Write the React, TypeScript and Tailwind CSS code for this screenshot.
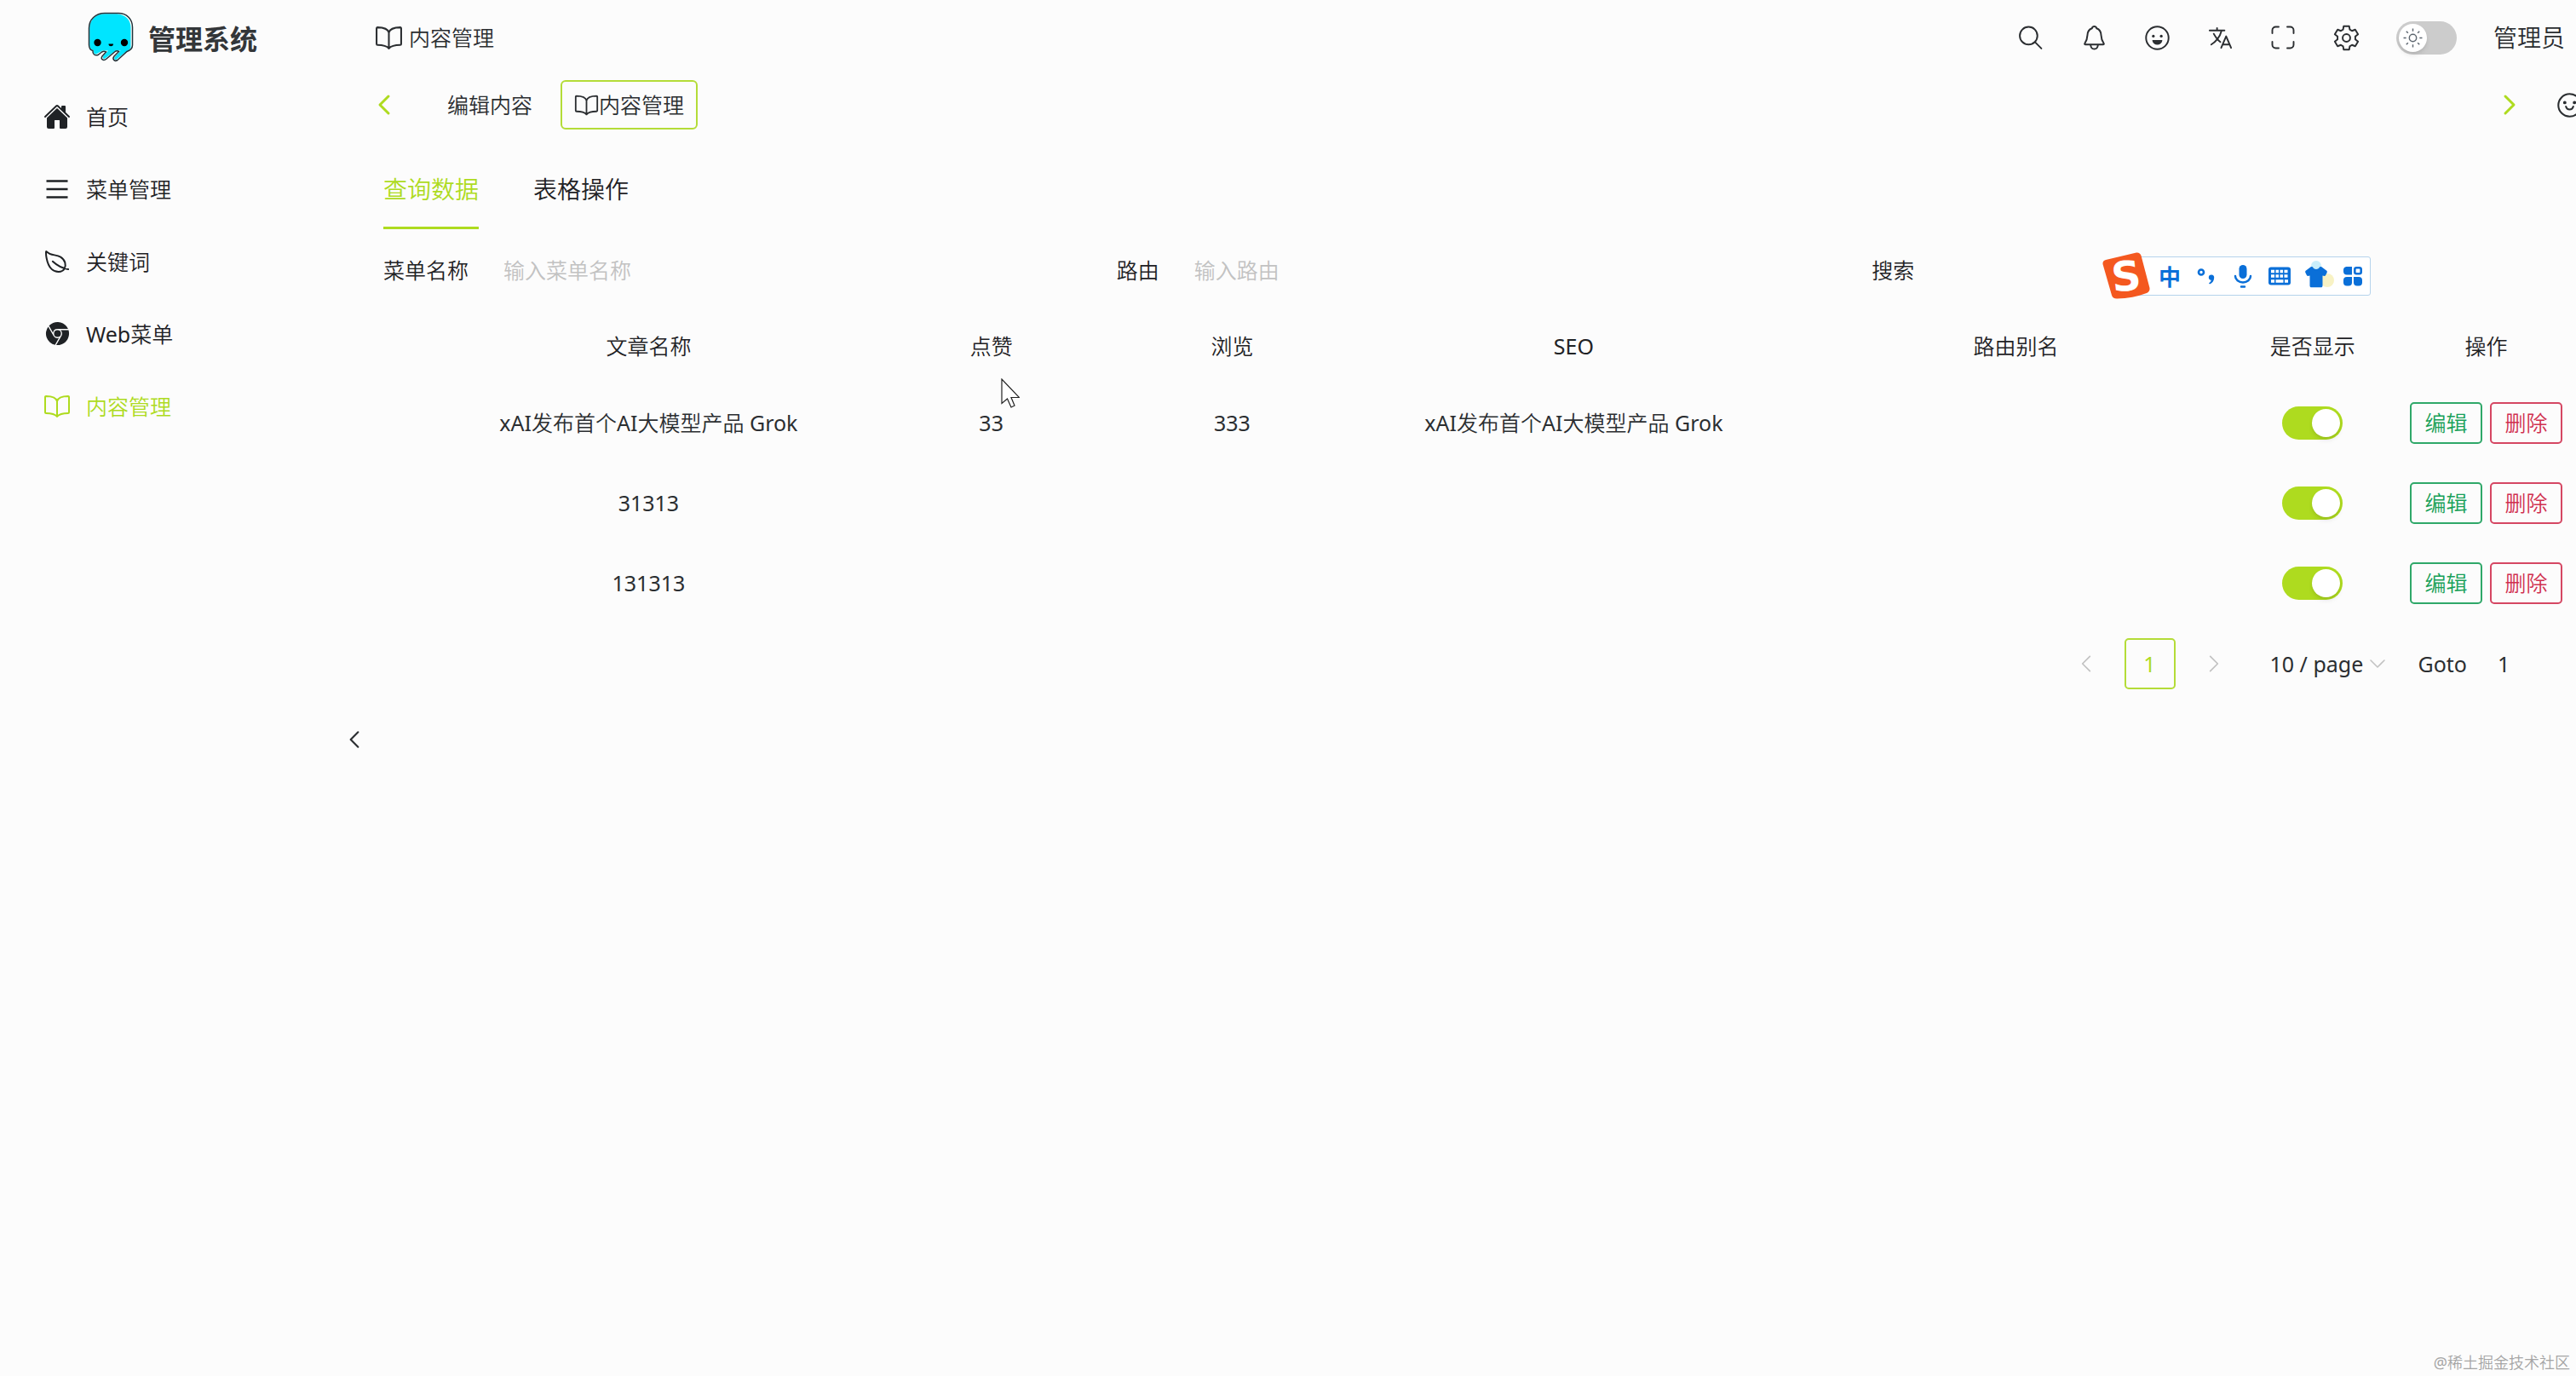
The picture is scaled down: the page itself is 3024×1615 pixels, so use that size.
import React, { useState } from "react";
import {
  IoBookOutline,
  IoHome,
  IoLanguageOutline,
  IoLeafOutline,
  IoLogoChrome,
} from "react-icons/io5";

const articles = [
  {
    id: 1,
    title: "xAI发布首个AI大模型产品 Grok",
    likes: "33",
    views: "333",
    seo: "xAI发布首个AI大模型产品 Grok",
    alias: "",
  },
  { id: 2, title: "31313", likes: "", views: "", seo: "", alias: "" },
  { id: 3, title: "131313", likes: "", views: "", seo: "", alias: "" },
];

function LogoIcon() {
  return (
    <svg viewBox="0 0 54 60" className="h-[60px] w-[54px]">
      <path
        d="M20 1.500H36C46 1.500 52.500 8.500 52.500 18V40C52.500 44 49 45.500 46 47L35 56.500C31 59 28.500 55 31 52L37 45.500L22 55C18.500 58 14.500 55.500 17 52L22 45.500L12 49.500C8 51.500 5.500 49 6 45.500C2.500 44.500 1.500 42 1.500 38.500V19C1.500 9 9 1.500 20 1.500Z"
        fill="#fff"
      />
      <path
        d="M20 2.200H34C44 3 50.500 9 50.500 18V41C50.500 44 47 45.500 44.500 47L34 55.500C32 57 30 55 32 52.500L38.500 45.500H33L21 54C19 56 16.500 54.500 18.500 51.500L24 45.500H17L11 49C8 50.500 6.500 48.500 7 45C3.500 44 2.200 42 2.200 38V19C2.200 9.500 9.500 2.200 20 2.200Z"
        fill="#00e5ff"
      />
      <path
        d="M20 1.500H36C46 1.500 52.500 8.500 52.500 18V39C52.500 43 50 45 46 46.500L35 56.500C31 59 28.500 55 31 52L36.500 46.500Q34 45 31.500 47L22 55C18.500 58 14.500 55.500 17 52L21.500 47Q19 45.500 16.500 47L12 50.500C8 51.500 5.500 49 6 45.500C2.500 44.500 1.500 42 1.500 38.500V19C1.500 9 9 1.500 20 1.500Z"
        fill="none"
        stroke="#22333a"
        strokeWidth="1.500"
      />
      <circle cx="11.500" cy="36" r="4.200" fill="#000" />
      <circle cx="43" cy="36" r="4.200" fill="#000" />
      <path d="M24.500 37.500h5.500q0 2.800-2.800 2.800t-2.700-2.800Z" fill="#000" />
    </svg>
  );
}

function MenuIcon() {
  return (
    <svg viewBox="0 0 30 30" className="size-[30px]">
      <path
        d="M2.500 5.500h25M2.500 15h25M2.500 24.500h25"
        stroke="currentColor"
        strokeWidth="2.400"
      />
    </svg>
  );
}

function SearchIcon() {
  return (
    <svg
      viewBox="0 0 30 30"
      className="size-[31px]"
      fill="none"
      stroke="currentColor"
      strokeWidth="1.900"
      strokeLinecap="round">
      <circle cx="12" cy="12.500" r="10" />
      <path d="M19.500 20l7 7" />
    </svg>
  );
}

function BellIcon() {
  return (
    <svg
      viewBox="0 0 30 30"
      className="size-[31px]"
      fill="none"
      stroke="currentColor"
      strokeWidth="1.900"
      strokeLinejoin="round">
      <path d="M15 2c-1.400 0-2.200.8-2.600 2.100C8.600 5.500 7.300 8.600 7.200 12c-.1 4.200-1.200 6.400-3 9.200-.4.800 0 1.300.8 1.300h20c.8 0 1.200-.5.800-1.300-1.800-2.800-2.900-5-3-9.200-.1-3.400-1.400-6.500-5.200-7.900C17.200 2.800 16.400 2 15 2Z" />
      <path d="M10.800 23c.3 2.900 2 4.600 4.200 4.600s3.900-1.700 4.200-4.600" />
    </svg>
  );
}

function GrinIcon() {
  return (
    <svg viewBox="0 0 30 30" className="size-[31px]">
      <circle
        cx="15"
        cy="15"
        r="12.800"
        fill="none"
        stroke="currentColor"
        strokeWidth="1.900"
      />
      <circle cx="10.500" cy="13" r="1.600" fill="currentColor" />
      <circle cx="19.500" cy="13" r="1.600" fill="currentColor" />
      <path
        d="M9.800 17.500h10.400c.4 0 .6.300.5.700-.6 2.800-2.900 4.600-5.700 4.600s-5.100-1.800-5.700-4.600c-.1-.4.1-.7.500-.7Z"
        fill="currentColor"
      />
    </svg>
  );
}

function ExpandIcon() {
  return (
    <svg
      viewBox="0 0 30 30"
      className="size-[30px]"
      fill="none"
      stroke="currentColor"
      strokeWidth="1.900"
      strokeLinecap="round">
      <path d="M2.500 10V6.500a4 4 0 0 1 4-4H10M20 2.500h3.500a4 4 0 0 1 4 4V10M27.500 20v3.500a4 4 0 0 1-4 4H20M10 27.500H6.500a4 4 0 0 1-4-4V20" />
    </svg>
  );
}

function GearIcon() {
  return (
    <svg
      viewBox="0 0 30 30"
      className="size-[31px]"
      fill="none"
      stroke="currentColor"
      strokeWidth="1.900"
      strokeLinejoin="round">
      <path d="M11.900 1.600h6.200l.7 3.900 2.500 1.500 3.700-1.400 3.200 5.300-3.100 2.500v3.200l3.100 2.500-3.200 5.300-3.700-1.400-2.500 1.500-.7 3.900h-6.200l-.7-3.900L8.700 23 5 24.400l-3.200-5.300 3.100-2.500v-3.200l-3.100-2.500L5 5.600 8.700 7l2.500-1.500Z" />
      <circle cx="15" cy="15" r="4.300" />
    </svg>
  );
}

function SunIcon() {
  return (
    <svg
      viewBox="0 0 22 22"
      className="pointer-events-none absolute top-2 left-2 size-[23px]"
      fill="none"
      stroke="#5d666f"
      strokeWidth="1.400">
      <circle cx="11" cy="11" r="4" />
      <path d="M11 .5v3M11 18.500v3M.5 11h3M18.500 11h3M3.600 3.600l2 2M16.400 16.400l2 2M3.600 18.400l2-2M16.400 5.600l2-2" />
    </svg>
  );
}

function SmileIcon() {
  return (
    <svg
      viewBox="0 0 30 30"
      className="size-[31px] shrink-0"
      fill="none"
      stroke="currentColor"
      strokeWidth="2"
      strokeLinecap="round">
      <circle cx="15" cy="15" r="12.800" />
      <circle cx="9.500" cy="12" r=".9" fill="currentColor" />
      <circle cx="20.500" cy="12" r=".9" fill="currentColor" />
      <path d="M10.800 16.500c.6 2.200 2.200 3.400 4.200 3.400s3.600-1.200 4.200-3.400" />
    </svg>
  );
}

function Chevron({ dir, className }: { dir: string; className?: string }) {
  const paths: any = {
    left: "M20 5L10 15l10 10",
    right: "M10 5l10 10-10 10",
    down: "M5 10l10 10 10-10",
  };
  return (
    <svg
      viewBox="0 0 30 30"
      className={className}
      fill="none"
      stroke="currentColor"
      strokeLinecap="round"
      strokeLinejoin="round">
      <path d={paths[dir]} />
    </svg>
  );
}

const menus = [
  { label: "首页", icon: <IoHome className="size-[32px]" /> },
  { label: "菜单管理", icon: <MenuIcon /> },
  { label: "关键词", icon: <IoLeafOutline className="size-[32px]" /> },
  { label: "Web菜单", icon: <IoLogoChrome className="size-[31px]" /> },
  { label: "内容管理", icon: <IoBookOutline className="size-[32px]" /> },
];

const tools = [
  { label: "搜索", icon: <SearchIcon /> },
  { label: "通知", icon: <BellIcon /> },
  { label: "表情", icon: <GrinIcon /> },
  { label: "语言", icon: <IoLanguageOutline className="size-[33px]" /> },
  { label: "全屏", icon: <ExpandIcon /> },
  { label: "设置", icon: <GearIcon /> },
];

function Sidebar() {
  const [active, setActive] = useState("内容管理");

  return (
    <aside className="relative w-[420px] shrink-0">
      <div className="flex h-[88px] items-center pl-[103px]">
        <LogoIcon />
        <h1 className="ml-[17px] font-['Noto_Sans_CJK_SC',sans-serif] text-[32px] font-bold text-[#333639]">
          管理系统
        </h1>
      </div>
      <nav className="mt-[6px]">
        {menus.map((m) => (
          <a
            key={m.label}
            href="#"
            onClick={() => setActive(m.label)}
            className={
              active === m.label
                ? "flex h-[85px] items-center pl-[50px] text-[#aedb1f]"
                : "flex h-[85px] items-center pl-[50px] text-[#1f2225]"
            }>
            <span className="flex w-[34px] justify-center">{m.icon}</span>
            <span className="ml-[17px]">{m.label}</span>
          </a>
        ))}
      </nav>
      <button
        aria-label="收起菜单"
        className="absolute top-[846px] -right-[18px] flex size-[44px] items-center justify-center">
        <Chevron dir="left" className="size-[26px] stroke-[2.5px]" />
      </button>
    </aside>
  );
}

function Header() {
  const [dark, setDark] = useState(false);

  return (
    <header className="flex h-[88px] items-center pr-[13px] pl-5">
      <IoBookOutline className="size-[33px]" />
      <span className="ml-[7px]">内容管理</span>
      <div className="ml-auto flex items-center gap-[43px]">
        {tools.map((t) => (
          <button
            key={t.label}
            aria-label={t.label}
            className="flex w-[31px] justify-center">
            {t.icon}
          </button>
        ))}
        <label className="relative flex">
          <input
            type="checkbox"
            role="switch"
            aria-label="暗色模式"
            checked={dark}
            onChange={() => setDark(!dark)}
            className="h-[39px] w-[71px] appearance-none rounded-full bg-[#cccccc] p-[3px] before:block before:size-[33px] before:rounded-full before:bg-white before:shadow-md"
          />
          <SunIcon />
        </label>
        <button className="text-[28px]">管理员</button>
      </div>
    </header>
  );
}

function Tags() {
  return (
    <div className="flex h-[70px] items-center overflow-hidden pl-4">
      <button aria-label="向左" className="text-[#aedb1f]">
        <Chevron dir="left" className="size-[30px] stroke-3" />
      </button>
      <button className="ml-[59px]">编辑内容</button>
      <button className="ml-[33px] flex h-[58px] items-center rounded-[6px] border-2 border-[#b4dc38] px-[14px]">
        <IoBookOutline className="size-[29px]" />
        内容管理
      </button>
      <button aria-label="向右" className="ml-auto text-[#aedb1f]">
        <Chevron dir="right" className="size-[30px] stroke-3" />
      </button>
      <button aria-label="标签操作" className="-mr-2 ml-[40px]">
        <SmileIcon />
      </button>
    </div>
  );
}

function Filters() {
  return (
    <form className="-mr-2 mt-[18px] grid h-[60px] grid-cols-3 items-center text-[#1f2225]">
      <div className="flex items-center">
        <label htmlFor="name">菜单名称</label>
        <input
          id="name"
          placeholder="输入菜单名称"
          className="ml-[41px] h-[60px] grow bg-transparent outline-none placeholder:text-[#c2c2c2]"
        />
      </div>
      <div className="flex items-center">
        <label htmlFor="route">路由</label>
        <input
          id="route"
          placeholder="输入路由"
          className="ml-[41px] h-[60px] grow bg-transparent outline-none placeholder:text-[#c2c2c2]"
        />
      </div>
      <button type="button" className="justify-self-start pl-[26px]">
        搜索
      </button>
    </form>
  );
}

function ArticleTable() {
  return (
    <div className="mt-4 pl-[60px]">
      <table className="w-full table-fixed text-center">
        <colgroup>
          <col className="w-[20%]" />
          <col className="w-[12%]" />
          <col className="w-[10.5%]" />
          <col className="w-[21.4%]" />
          <col className="w-[19.9%]" />
          <col className="w-[7.8%]" />
          <col />
        </colgroup>
        <thead>
          <tr className="h-[86px] text-[#1f2225]">
            <th className="font-normal">文章名称</th>
            <th className="font-normal">点赞</th>
            <th className="font-normal">浏览</th>
            <th className="font-normal">SEO</th>
            <th className="font-normal">路由别名</th>
            <th className="font-normal">是否显示</th>
            <th className="font-normal">操作</th>
          </tr>
        </thead>
        <tbody>
          {articles.map((a) => (
            <tr key={a.id} className="h-[94px]">
              <td>{a.title}</td>
              <td>{a.likes}</td>
              <td>{a.views}</td>
              <td>{a.seo}</td>
              <td>{a.alias}</td>
              <td>
                <input
                  type="checkbox"
                  role="switch"
                  aria-label="是否显示"
                  defaultChecked
                  className="mx-auto block h-[39px] w-[71px] appearance-none rounded-full bg-[#cccccc] p-[3px] before:block before:size-[33px] before:rounded-full before:bg-white before:shadow-md checked:bg-[#aedb1f] checked:before:ml-auto"
                />
              </td>
              <td>
                <div className="flex justify-center gap-[9px]">
                  <button className="h-[49px] w-[85px] rounded-[5px] border-2 border-[#2fa869] text-[#18a058]">
                    编辑
                  </button>
                  <button className="h-[49px] w-[85px] rounded-[5px] border-2 border-[#d54763] text-[#d03050]">
                    删除
                  </button>
                </div>
              </td>
            </tr>
          ))}
        </tbody>
      </table>
    </div>
  );
}

function Pagination() {
  return (
    <div className="mt-[18px] flex items-center justify-end pr-[14px]">
      <button
        aria-label="上一页"
        className="flex size-[60px] items-center justify-center text-[#c2c2c2]">
        <Chevron dir="left" className="size-[26px] stroke-2" />
      </button>
      <button className="mx-[15px] size-[60px] rounded-[5px] border-2 border-[#b4dc38] text-[#aedb1f]">
        1
      </button>
      <button
        aria-label="下一页"
        className="flex size-[60px] items-center justify-center text-[#c2c2c2]">
        <Chevron dir="right" className="size-[26px] stroke-2" />
      </button>
      <div className="relative ml-9">
        <select
          aria-label="每页条数"
          className="w-[138px] appearance-none bg-transparent">
          <option>10 / page</option>
          <option>20 / page</option>
        </select>
        <Chevron
          dir="down"
          className="pointer-events-none absolute top-2 right-0 size-[24px] stroke-2 text-[#c2c2c2]"
        />
      </div>
      <label htmlFor="goto" className="ml-9">
        Goto
      </label>
      <input
        id="goto"
        defaultValue="1"
        className="ml-9 w-[78px] bg-transparent outline-none"
      />
    </div>
  );
}

// floating input method bar, sits over the page
function ImeBar() {
  return (
    <div className="absolute top-[296px] right-[241px] flex items-center text-[#0a6fd8]">
      <svg viewBox="0 0 56 56" className="z-10 size-[56px] overflow-visible">
        <path
          d="M4 9L40 .5Q44 0 45.500 4L55.500 42Q56 46 52 48Q36 54 17 54.500Q12 54.500 11 50.500L.5 14Q0 10 4 9Z"
          fill="#f4581f"
        />
        <text
          x="28"
          y="45"
          textAnchor="middle"
          transform="rotate(-6 28 28)"
          fontFamily="DejaVu Sans"
          fontWeight="bold"
          fontSize="48"
          fill="#fff">
          S
        </text>
      </svg>
      <div className="-ml-4 flex h-[46px] items-center gap-[15px] rounded-[3px] border border-[#b5d3ec] bg-white pr-[6px] pl-6">
        <button className="w-[28px] text-center font-['Noto_Sans_CJK_SC',sans-serif] text-[26px] leading-7 font-bold">
          中
        </button>
        <button aria-label="标点">
          <svg viewBox="0 0 28 28" className="size-[28px]">
            <circle
              cx="8"
              cy="9.500"
              r="3"
              fill="none"
              stroke="currentColor"
              strokeWidth="2.600"
            />
            <path
              d="M16.800 15.500a3.200 3.200 0 0 1 6.400.2c0 3.500-1.900 6.300-5.200 7.800l-1-1.300c1.700-1 2.500-2 2.700-3.500a3.200 3.200 0 0 1-2.900-3.200Z"
              fill="currentColor"
            />
          </svg>
        </button>
        <button aria-label="语音">
          <svg
            viewBox="0 0 28 28"
            className="size-[28px]"
            fill="none"
            stroke="currentColor"
            strokeWidth="2.500"
            strokeLinecap="round">
            <rect
              x="9.500"
              y="1"
              width="9"
              height="16"
              rx="4.500"
              fill="currentColor"
              stroke="none"
            />
            <path d="M5 14a9 7.500 0 0 0 18 0M12 26.500h4" />
          </svg>
        </button>
        <button aria-label="键盘">
          <svg viewBox="0 0 28 28" className="size-[28px]">
            <rect x="1" y="3.500" width="26" height="21" rx="3" fill="currentColor" />
            <path
              d="M4 8.500h4m1.500 0h3.500m1.500 0h3.500m1.500 0h4M4 14h4m1.500 0h3.500m1.500 0h3.500m1.500 0h4M4 20h4m1.500 0h9m1.500 0h4"
              stroke="#fff"
              strokeWidth="3.400"
            />
          </svg>
        </button>
        <button aria-label="皮肤">
          <svg viewBox="0 0 28 28" className="size-[28px] overflow-visible">
            <circle cx="14" cy="2" r="6" fill="#c9eefb" />
            <circle cx="27" cy="19" r="8" fill="#f8f2c4" />
            <path
              d="M8 3l2 .3c1 3.700 7 3.700 8 0L20 3l6 4.500c1 .8 1 1.500.6 2.500L25 13.200c-.5 1-1.500 1-3.500.4V25c0 1.600-.6 2.300-2 2.300h-11c-1.400 0-2-.7-2-2.300V13.600c-2 .6-3 .6-3.500-.4L1.400 10C1 9 1 8.300 2 7.500Z"
              fill="currentColor"
            />
          </svg>
        </button>
        <button aria-label="工具箱">
          <svg viewBox="0 0 28 28" className="size-[28px]" fill="currentColor">
            <path d="M6.500 3H13v9.500H7a4 4 0 0 1-4-4V7a4 4 0 0 1 3.500-4Z" />
            <rect
              x="16.300"
              y="4.300"
              width="7.400"
              height="7"
              rx="2"
              fill="none"
              stroke="currentColor"
              strokeWidth="2.600"
            />
            <path d="M7 15h6v6.500a4 4 0 0 1-4 4H7a4 4 0 0 1-4-4V19a4 4 0 0 1 4-4Z" />
            <path d="M15 15h6a4 4 0 0 1 4 4v2.500a4 4 0 0 1-4 4h-2a4 4 0 0 1-4-4Z" />
          </svg>
        </button>
      </div>
    </div>
  );
}

export default function App() {
  const [tab, setTab] = useState("查询数据");

  return (
    <div className="relative flex min-h-screen overflow-hidden bg-[#fcfcfc] font-['Noto_Sans','Noto_Sans_CJK_SC_DemiLight','Noto_Sans_CJK_SC',sans-serif] text-[25px] leading-10 text-[#2b2e31]">
      <Sidebar />
      <main className="min-w-0 grow">
        <Header />
        <Tags />
        <section className="pl-[30px]">
          <div role="tablist" className="mt-[43px] flex gap-16">
            {["查询数据", "表格操作"].map((t) => (
              <button
                key={t}
                role="tab"
                aria-selected={tab === t}
                onClick={() => setTab(t)}
                className={
                  tab === t
                    ? "border-b-[3px] border-[#aedb1f] pb-[23px] text-[28px] leading-[42px] text-[#aedb1f]"
                    : "border-b-[3px] border-transparent pb-[23px] text-[28px] leading-[42px] text-[#1f2225]"
                }>
                {t}
              </button>
            ))}
          </div>
          <Filters />
          <ArticleTable />
          <Pagination />
        </section>
      </main>
      <ImeBar />
      <svg
        viewBox="0 0 22 36"
        className="pointer-events-none absolute top-[444px] left-[1175px] h-[36px] w-[22px]">
        <path
          d="M1 1V29.500L7.500 24L12 34L16 32L12 22.500H21.500Z"
          fill="#fff"
          stroke="#222"
          strokeWidth="1.200"
        />
      </svg>
      <p className="absolute right-[7px] bottom-0 text-[18px] leading-8 text-[#a5a5a5]">
        @稀土掘金技术社区
      </p>
    </div>
  );
}
